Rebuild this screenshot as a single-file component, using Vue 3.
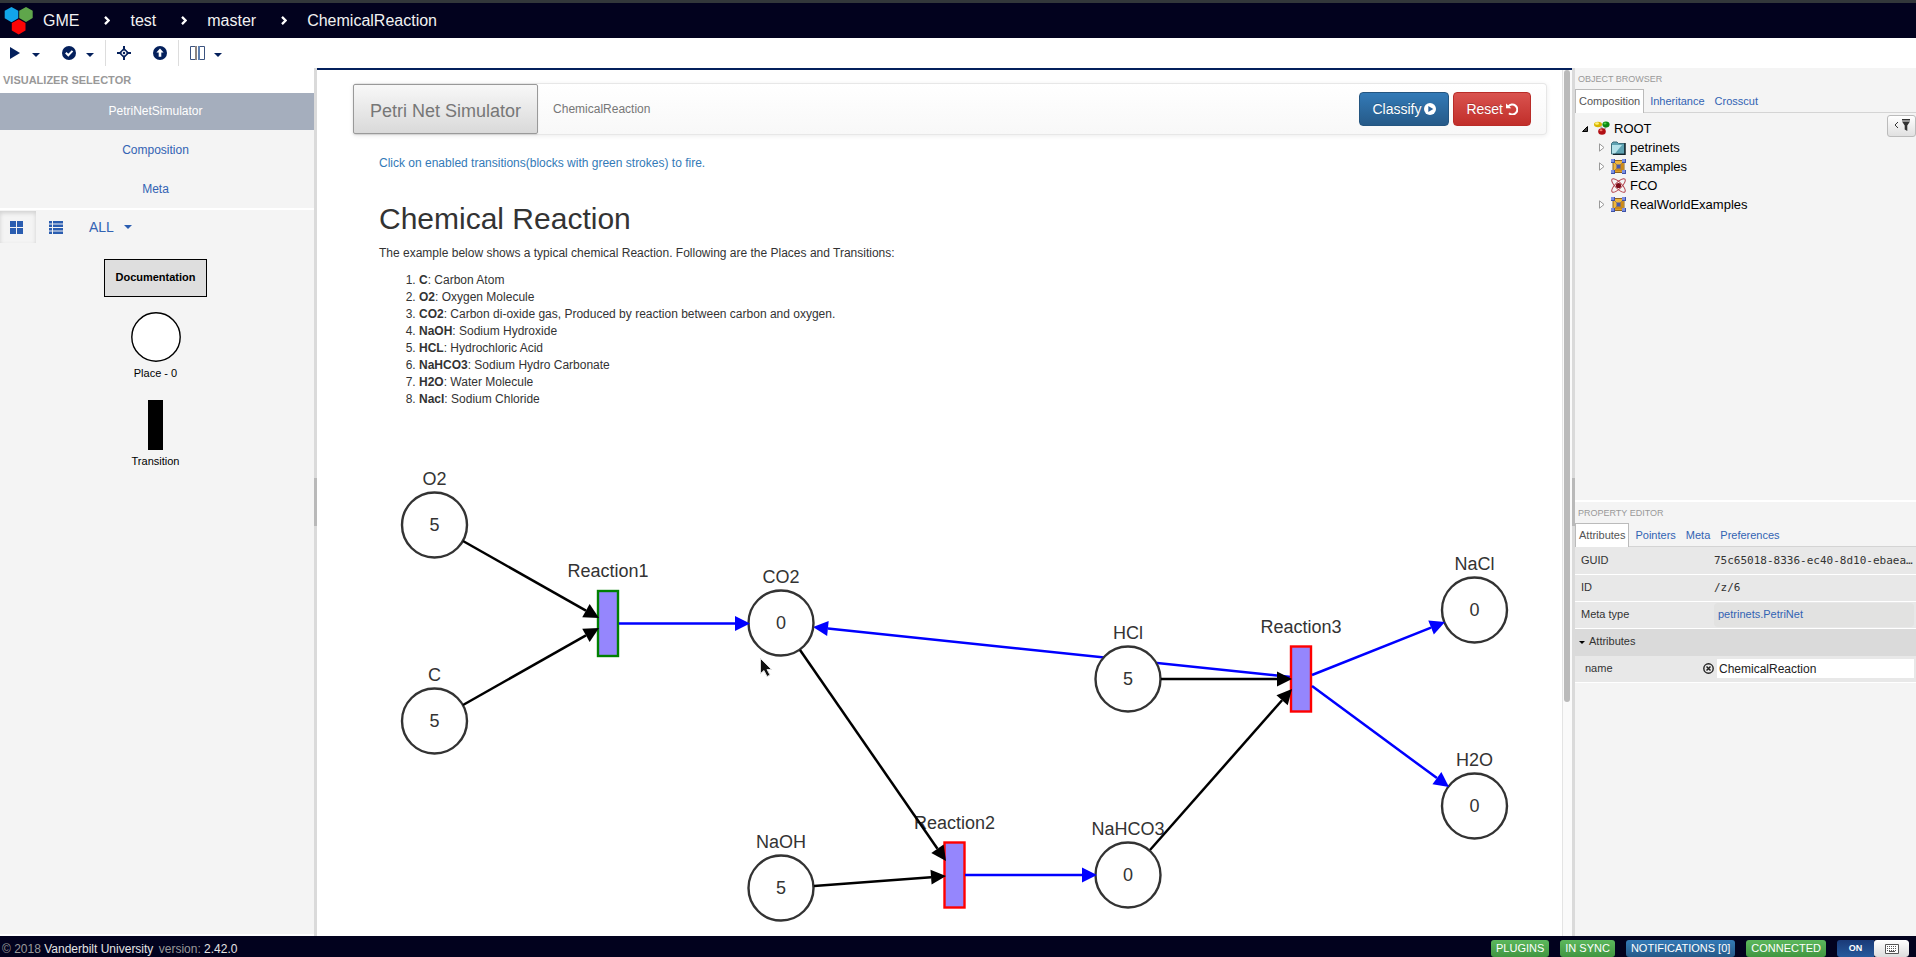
<script setup>
const crumbs = ['test', 'master', 'ChemicalReaction']
const visualizers = ['PetriNetSimulator', 'Composition', 'Meta']
const species = [
  ['C', 'Carbon Atom'],
  ['O2', 'Oxygen Molecule'],
  ['CO2', 'Carbon di-oxide gas, Produced by reaction between carbon and oxygen.'],
  ['NaOH', 'Sodium Hydroxide'],
  ['HCL', 'Hydrochloric Acid'],
  ['NaHCO3', 'Sodium Hydro Carbonate'],
  ['H2O', 'Water Molecule'],
  ['Nacl', 'Sodium Chloride']
]
const places = [
  { name: 'O2', tokens: 5, x: 117.5, y: 95 },
  { name: 'C', tokens: 5, x: 117.5, y: 291 },
  { name: 'CO2', tokens: 0, x: 464, y: 193 },
  { name: 'NaOH', tokens: 5, x: 464, y: 458 },
  { name: 'HCl', tokens: 5, x: 811, y: 249 },
  { name: 'NaHCO3', tokens: 0, x: 811, y: 445 },
  { name: 'NaCl', tokens: 0, x: 1157.5, y: 180 },
  { name: 'H2O', tokens: 0, x: 1157.5, y: 376 }
]
const transitions = [
  { name: 'Reaction1', x: 291, y: 193, enabled: true },
  { name: 'Reaction2', x: 637.5, y: 444.5, enabled: false },
  { name: 'Reaction3', x: 984, y: 248.5, enabled: false }
]
function arc(x1, y1, x2, y2, kind) {
  const len = Math.hypot(x2 - x1, y2 - y1)
  const ux = (x2 - x1) / len
  const uy = (y2 - y1) / len
  const bx = x2 - ux * 15
  const by = y2 - uy * 15
  return {
    line: `M${x1} ${y1}L${bx} ${by}`,
    head: `${x2},${y2} ${bx - uy * 7.5},${by + ux * 7.5} ${bx + uy * 7.5},${by - ux * 7.5}`,
    kind
  }
}
const backArcs = [arc(974, 247, 496, 197, 'out')]
const arcs = [
  arc(146, 111, 282, 188, 'in'),
  arc(146, 275, 282, 198, 'in'),
  arc(302, 193.5, 433, 193.5, 'out'),
  arc(483, 220, 629, 431, 'in'),
  arc(497, 456, 629, 446, 'in'),
  arc(648, 445, 780, 445, 'out'),
  arc(844, 249, 975, 249, 'in'),
  arc(833, 420, 975, 259, 'in'),
  arc(995, 245, 1128, 192, 'out'),
  arc(995, 256, 1132, 357, 'out')
]
const treeItems = [
  { name: 'petrinets', icon: 'folder', open: true },
  { name: 'Examples', icon: 'model', open: true },
  { name: 'FCO', icon: 'atom', open: false },
  { name: 'RealWorldExamples', icon: 'model', open: true }
]
</script>

<template>
  <div class="app">
    <header class="topbar">
      <svg class="logo" width="30" height="30" viewBox="0 0 30 30" aria-hidden="true">
        <path fill="#12a5e9" d="M7.500 1l6.800 3.800v7.500l-6.800 3.900-6.800-3.900v-7.500z" />
        <path fill="#5fa64b" d="M22 1l6.700 3.800v7.300l-6.700 3.900-6.800-3.900v-7.300z" />
        <path fill="#fb0505" d="M14.700 13.200l6.800 3.900v7.500l-6.800 4-6.900-4v-7.500z" />
      </svg>
      <a href="#" class="crumb">GME</a>
      <template v-for="c in crumbs" :key="c">
        <svg class="chev" width="6" height="9" viewBox="0 0 6 9" aria-hidden="true">
          <path d="M1 .900L4.600 4.500 1 8.100" fill="none" stroke="#fff" stroke-width="2.300" />
        </svg>
        <a href="#" class="crumb">{{ c }}</a>
      </template>
    </header>

    <div class="toolbar">
      <button class="tool tool-play" aria-label="Run plugin">
        <svg width="10" height="12" viewBox="0 0 10 12"><path d="M0 0l10 6-10 6z" fill="#04205c" /></svg>
        <span class="caret"></span>
      </button>
      <button class="tool tool-check" aria-label="Constraints">
        <svg width="14" height="14" viewBox="0 0 14 14"><circle cx="7" cy="7" r="7" fill="#04205c" /><path d="M3.800 6.800l2.500 2.500 4.200-4.400" fill="none" stroke="#fff" stroke-width="2" /></svg>
        <span class="caret"></span>
      </button>
      <span class="sep"></span>
      <button class="tool tool-move" aria-label="Crosshair">
        <svg width="14" height="14" viewBox="0 0 14 14"><path fill="#04205c" d="M6 0h2v4.500H6zM6 9.500h2V14H6zM0 6h4.500v2H0zM9.500 6H14v2H9.500z" /><path d="M7 2.800L11.200 7 7 11.200 2.800 7z" fill="none" stroke="#04205c" stroke-width="1.600" stroke-dasharray="4.600 1.340" stroke-dashoffset="-.67" /><circle cx="7" cy="7" r="1.200" fill="#04205c" /></svg>
      </button>
      <button class="tool tool-up" aria-label="Apply">
        <svg width="14" height="14" viewBox="0 0 14 14"><circle cx="7" cy="7" r="7" fill="#04205c" /><path d="M7 2.600l3.600 4H8.300v4.200H5.700V6.600H3.400z" fill="#fff" /></svg>
      </button>
      <span class="sep"></span>
      <button class="tool tool-split" aria-label="Split panels">
        <svg width="15" height="14" viewBox="0 0 15 14"><path d="M.5.500h5v13h-5zM9.500.500h5v13h-5z" fill="none" stroke="#3c537f" /><path d="M5 0h2v14H5z" fill="#8d8580" /><path d="M8 0h2v14H8z" fill="#5f7fae" /></svg>
        <span class="caret"></span>
      </button>
    </div>

    <div class="body">
      <aside class="left">
        <h2 class="left-title">VISUALIZER SELECTOR</h2>
        <nav class="visualizers">
          <a v-for="(v, i) in visualizers" :key="v" href="#" :class="{ active: i === 0 }">{{ v }}</a>
        </nav>
        <div class="filter">
          <button class="view on" aria-label="Grid view">
            <svg width="13" height="13" viewBox="0 0 13 13"><path fill="#2a5db0" d="M0 0h6v6H0zM7 0h6v6H7zM0 7h6v6H0zM7 7h6v6H7z" /></svg>
          </button>
          <button class="view" aria-label="List view">
            <svg width="14" height="13" viewBox="0 0 14 13"><path fill="#2a5db0" d="M0 0h3v2.500H0zM4 0h10v2.500H4zM0 3.500h3V6H0zM4 3.500h10V6H4zM0 7h3v2.500H0zM4 7h10v2.500H4zM0 10.500h3V13H0zM4 10.500h10V13H4z" /></svg>
          </button>
          <button class="all">ALL <span class="caret"></span></button>
        </div>
        <div class="parts">
          <div class="doc">Documentation</div>
          <svg class="place" width="50" height="50" viewBox="0 0 50 50"><circle cx="25" cy="25" r="24.200" fill="#fff" stroke="#000" stroke-width="1.400" /></svg>
          <div class="part-label">Place - 0</div>
          <div class="trans"></div>
          <div class="part-label">Transition</div>
        </div>
      </aside>
      <div class="splitter"><i></i></div>

      <main class="center">
        <div class="scroll">
          <div class="navbar">
            <a href="#" class="brand">Petri Net Simulator</a>
            <a href="#" class="current">ChemicalReaction</a>
            <div class="actions">
              <button class="btn primary">Classify
                <svg width="12" height="12" viewBox="0 0 12 12"><circle cx="6" cy="6" r="6" fill="#fff" /><path d="M4.300 2.900l5 3.100-5 3.100z" fill="#2a639c" /></svg>
              </button>
              <button class="btn danger">Reset
                <svg width="12" height="12" viewBox="0 0 12 12"><path d="M2.300 3.500A5 5 0 1 1 3 10.300" fill="none" stroke="#fff" stroke-width="2" /><path d="M0 .500l5.300 4.800H0z" fill="#fff" /></svg>
              </button>
            </div>
          </div>
          <div class="article">
            <a href="#" class="hint">Click on enabled transitions(blocks with green strokes) to fire.</a>
            <h1>Chemical Reaction</h1>
            <p>The example below shows a typical chemical Reaction. Following are the Places and Transitions:</p>
            <ol>
              <li v-for="s in species" :key="s[0]"><b>{{ s[0] }}</b>: {{ s[1] }}</li>
            </ol>
          </div>
          <svg class="net" role="img" aria-label="Petri net">
            <g v-for="(a, i) in backArcs" :key="'b' + i" :class="a.kind">
              <path :d="a.line" /><polygon :points="a.head" />
            </g>
            <g v-for="p in places" :key="p.name">
              <circle :cx="p.x" :cy="p.y" r="32.500" class="node" />
              <text :x="p.x" :y="p.y + 6">{{ p.tokens }}</text>
              <text :x="p.x" :y="p.y - 40">{{ p.name }}</text>
            </g>
            <g v-for="t in transitions" :key="t.name">
              <rect :x="t.x - 10" :y="t.y - 32" width="20" height="65" :class="['bar', { enabled: t.enabled }]" />
              <text :x="t.x" :y="t.y - 46">{{ t.name }}</text>
            </g>
            <g v-for="(a, i) in arcs" :key="i" :class="a.kind">
              <path :d="a.line" /><polygon :points="a.head" />
            </g>
            <path class="pointer" d="M443.500 228.500v15l3.500-3 3 6 3-1.500-3-5.500h4.500z" />
          </svg>
        </div>
        <div class="track"><i></i></div>
      </main>
      <div class="splitter"><i></i></div>

      <aside class="right">
        <section class="browser">
          <h2>OBJECT BROWSER</h2>
          <nav class="tabs">
            <a href="#" class="active">Composition</a><a href="#">Inheritance</a><a href="#">Crosscut</a>
          </nav>
          <div class="tree-area">
            <ul class="tree">
              <li class="root">
                <svg class="exp" width="6" height="6" viewBox="0 0 6 6"><path d="M5.500.500v5h-5z" fill="#444" stroke="#000" /></svg>
                <svg width="16" height="15" viewBox="0 0 16 15"><ellipse cx="4" cy="3.500" rx="4" ry="2.700" fill="#d9b600" /><ellipse cx="3" cy="2.500" rx="2" ry="1.200" fill="#fff27a" /><path d="M6.500 5.500L10 9l2.500-4" fill="none" stroke="#aaa" stroke-width="1.500" /><ellipse cx="12" cy="3.500" rx="3.600" ry="3" fill="#0b8a12" /><ellipse cx="11" cy="2.500" rx="1.500" ry="1" fill="#52d04c" /><ellipse cx="8" cy="10.500" rx="3.800" ry="3.300" fill="#b10f14" /><ellipse cx="7" cy="9.300" rx="1.500" ry="1" fill="#f47a6a" /></svg>
                <span>ROOT</span>
              </li>
              <li v-for="t in treeItems" :key="t.name">
                <svg class="exp" width="6" height="9" viewBox="0 0 6 9"><path v-if="t.open" d="M.5.800v7.400L5 4.500z" fill="#fff" stroke="#999" /></svg>
                <svg v-if="t.icon === 'folder'" width="15" height="14" viewBox="0 0 15 14"><path d="M.5 2.500L2 1h4l1.500 1.500h6V13H.5z" fill="#5fa3b3" stroke="#3f6f7c" /><path d="M1 4h10l-7 8.500H1z" fill="#b5e2ea" /><path d="M14 2v11.500H2" fill="none" stroke="#12242c" stroke-width="1.500" /></svg>
                <svg v-else-if="t.icon === 'model'" width="15" height="15" viewBox="0 0 15 15"><path d="M2 1.500h11v12H2z" fill="#efb63c" stroke="#8f6420" /><path d="M3 12.500L12 3v9.500z" fill="#cf8a16" /><path d="M3 3l9 9M12 3l-9 9" stroke="#a9854a" /><path d="M5.500 5.500h4v4h-4z" fill="#4658b0" /><path d="M0 0h4v4H0zM11 0h4v4h-4zM0 11h4v4H0zM11 11h4v4h-4z" fill="#3e52a8" /><path d="M0 0h3v3H0zM11 0h3v3h-3zM0 11h3v3H0zM11 11h3v3h-3z" fill="#7c90e4" /></svg>
                <svg v-else width="15" height="15" viewBox="0 0 15 15"><g fill="none" stroke="#b3424d"><ellipse cx="7.500" cy="7.500" rx="9" ry="3.200" transform="rotate(45 7.500 7.500)" /><ellipse cx="7.500" cy="7.500" rx="9" ry="3.200" transform="rotate(-45 7.500 7.500)" /></g><circle cx="7.500" cy="7.500" r="2.600" fill="#7d0c18" /></svg>
                <span>{{ t.name }}</span>
              </li>
            </ul>
            <button class="funnel" aria-label="Filter">
              <svg width="16" height="14" viewBox="0 0 16 14"><path d="M4 4L1 7l3 3" fill="none" stroke="#333" /><path d="M8 1h8v1.500H8zM8 3.500h8l-2.700 4V13l-2.600-1.500v-4z" fill="#333" /></svg>
            </button>
          </div>
        </section>

        <section class="editor">
          <h2>PROPERTY EDITOR</h2>
          <nav class="tabs">
            <a href="#" class="active">Attributes</a><a href="#">Pointers</a><a href="#">Meta</a><a href="#">Preferences</a>
          </nav>
          <table>
            <tbody>
              <tr><th>GUID</th><td class="mono">75c65018-8336-ec40-8d10-ebaea…</td></tr>
              <tr><th>ID</th><td class="mono">/z/6</td></tr>
              <tr><th>Meta type</th><td><a href="#" class="meta">petrinets.PetriNet</a></td></tr>
              <tr class="group"><th colspan="2"><span class="caret small"></span>Attributes</th></tr>
              <tr class="field">
                <th><label for="attr-name">name</label></th>
                <td>
                  <div class="edit">
                    <button aria-label="Reset value"><svg width="11" height="11" viewBox="0 0 11 11"><circle cx="5.500" cy="5.500" r="4.700" fill="none" stroke="#222" stroke-width="1.400" /><path d="M3.500 3.500l4 4M7.500 3.500l-4 4" stroke="#222" stroke-width="1.500" /></svg></button>
                    <input id="attr-name" type="text" value="ChemicalReaction" />
                  </div>
                </td>
              </tr>
            </tbody>
          </table>
        </section>
      </aside>
    </div>

    <footer class="footer">
      <div class="copy">© 2018 <a href="#">Vanderbilt University</a> <span class="ver">version: <b>2.42.0</b></span></div>
      <div class="badges">
        <button class="badge green">PLUGINS</button>
        <button class="badge green">IN SYNC</button>
        <button class="badge blue">NOTIFICATIONS [0]</button>
        <button class="badge green">CONNECTED</button>
        <button class="toggle" aria-label="Keyboard shortcuts on">
          <span class="on">ON</span>
          <span class="knob"><svg width="14" height="10" viewBox="0 0 14 10"><path d="M.5.500h13v9H.5z" fill="#fff" stroke="#555" /><path d="M2 2.500h10M2 4.500h10M2 6.500h10" stroke="#555" stroke-dasharray="1 1" /><path d="M4 7.500h6" stroke="#555" /></svg></span>
        </button>
      </div>
    </footer>
  </div>
</template>

<style>
body {
  margin: 0;
  background: #fff;
}
</style>

<style scoped>
.app {
  display: grid;
  grid-template-rows: auto auto minmax(0, 1fr) auto;
  height: 100vh;
  overflow: hidden;
  font: 12px/17px "Liberation Sans", Arial, sans-serif;
  color: #333;
}
a {
  color: #3263b3;
  text-decoration: none;
}
button {
  margin: 0;
  padding: 0;
  border: 0;
  background: none;
  font: inherit;
  color: inherit;
}
h1,
h2,
p,
ol,
ul {
  margin: 0;
  padding: 0;
}
svg {
  display: block;
  flex: none;
}
.caret {
  width: 0;
  border: 4px solid transparent;
  border-top-color: #04205c;
  border-bottom: 0;
}

.topbar {
  display: flex;
  align-items: center;
  height: 35px;
  padding-left: 4px;
  border-top: 3px solid #32373a;
  background: #02021e;
}
.logo {
  margin-right: 9px;
}
.crumb {
  font-size: 16px;
  color: #f2f2f2;
}
.chev {
  margin: 0 20px 0 25px;
}

.toolbar {
  display: flex;
  align-items: center;
  height: 30px;
  padding-left: 10px;
}
.tool {
  display: flex;
  align-items: center;
}
.tool .caret {
  margin-top: 3px;
}
.tool-play {
  gap: 12px;
  margin-right: 22px;
}
.tool-check {
  gap: 10px;
  margin-right: 11px;
}
.tool-move {
  margin: 0 22px 0 11px;
}
.tool-up {
  margin-right: 11px;
}
.tool-split {
  gap: 9px;
  margin-left: 11px;
}
.sep {
  width: 1px;
  height: 26px;
  background: #ddd;
}

.body {
  display: grid;
  grid-template-columns: 314px 3px minmax(0, 1fr) 3px 341px;
  min-height: 0;
}
.splitter {
  display: flex;
  align-items: center;
  background: #dadada;
}
.splitter i {
  width: 3px;
  height: 48px;
  background: #b9b9b9;
}

.left {
  border-bottom: 2px solid #fff;
  background: #f4f4f4;
}
.left-title {
  height: 25px;
  padding-left: 3px;
  background: #fff;
  color: #999;
  font-size: 11px;
  line-height: 24px;
}
.visualizers {
  display: flex;
  flex-direction: column;
  gap: 2px;
  border-bottom: 2px solid #fff;
}
.visualizers a {
  padding-right: 3px;
  text-align: center;
  line-height: 37px;
}
.visualizers .active {
  background: #a5aebd;
  color: #fff;
}
.filter {
  display: flex;
  align-items: center;
  height: 34px;
}
.view {
  display: flex;
  align-items: center;
  justify-content: center;
  box-sizing: border-box;
  width: 36px;
  height: 32px;
}
.view + .view {
  width: 40px;
}
.view.on {
  padding-right: 3px;
  box-shadow: inset 0 2px 4px rgba(0, 0, 0, 0.15);
}
.all {
  display: flex;
  align-items: center;
  gap: 10px;
  margin-left: 13px;
  font-size: 14px;
  line-height: 20px;
  color: #3263b3;
}
.all .caret {
  border-top-color: #2a5db0;
}
.parts {
  display: flex;
  flex-direction: column;
  align-items: center;
  padding: 15px 3px 0 0;
  color: #000;
  font-size: 11px;
}
.doc {
  box-sizing: border-box;
  width: 103px;
  height: 38px;
  border: 1px solid #000;
  background: #dedede;
  font-weight: bold;
  line-height: 34px;
  text-align: center;
}
.place {
  margin-top: 15px;
}
.part-label {
  margin-top: 3px;
}
.trans {
  width: 15px;
  height: 50px;
  margin-top: 18px;
  background: #000;
}

.center {
  display: flex;
  min-width: 0;
  overflow: hidden;
  border-top: 2px solid #04205c;
  background: #fff;
}
.scroll {
  flex: 1;
  min-width: 0;
  overflow: hidden;
}
.track {
  width: 8px;
  padding-left: 1px;
  border-left: 1px solid #e4e4e4;
  background: #fafafa;
}
.track i {
  display: block;
  width: 6px;
  height: 73%;
  border-radius: 3px;
  background: #bababa;
}
.navbar {
  display: flex;
  align-items: center;
  box-sizing: border-box;
  height: 52px;
  margin: 13px 15px 0 36px;
  padding-right: 15px;
  border: 1px solid #e7e7e7;
  border-left: 0;
  border-radius: 4px;
  background: linear-gradient(#fff, #f8f8f8);
  box-shadow: 0 1px 5px rgba(0, 0, 0, 0.08);
}
.brand {
  box-sizing: border-box;
  height: 50px;
  padding: 0 16px;
  border: 1px solid #999;
  border-radius: 2px;
  background: linear-gradient(#f8f8f8, #d9d9d9);
  box-shadow: 0 1px 2px rgba(0, 0, 0, 0.1);
  color: #777;
  font-size: 18px;
  line-height: 52px;
}
.current {
  margin-left: 15px;
  color: #777;
}
.actions {
  display: flex;
  gap: 4px;
  margin-left: auto;
}
.btn {
  display: flex;
  align-items: center;
  gap: 3px;
  height: 34px;
  padding: 0 12px;
  border: 1px solid;
  border-radius: 4px;
  color: #fff;
  font-size: 14px;
  text-shadow: 0 -1px 0 rgba(0, 0, 0, 0.2);
}
.primary {
  border-color: #245580;
  background: linear-gradient(#337ab7, #265a88);
}
.danger {
  border-color: #b92c28;
  background: linear-gradient(#d9534f, #c12e2a);
}
.article {
  padding: 20px 62px 0;
}
.hint {
  display: block;
  color: #337ab7;
}
h1 {
  margin: 30px 0 10px;
  font-size: 30px;
  font-weight: normal;
  line-height: 33px;
}
ol {
  margin-top: 10px;
  padding-left: 40px;
}
.net {
  width: 100%;
  height: 506px;
  margin-top: 22px;
  overflow: visible;
}
.net text {
  fill: #333;
  font-size: 18px;
  text-anchor: middle;
}
.node {
  fill: #fff;
  stroke: #333;
  stroke-width: 2.4px;
}
.bar {
  fill: #9586fd;
  stroke: #f00;
  stroke-width: 2.4px;
}
.bar.enabled {
  stroke: #008000;
}
.in path,
.out path {
  fill: none;
  stroke: #000;
  stroke-width: 2.5px;
}
.out path {
  stroke: #00f;
}
.out polygon {
  fill: #00f;
}
.pointer {
  fill: #111;
  stroke: #ddd;
}

.right {
  display: grid;
  grid-template-rows: 434px minmax(0, 1fr);
  min-width: 0;
  background: #f4f4f4;
}
.browser {
  box-sizing: border-box;
  border-bottom: 2px solid #fff;
}
.editor {
  min-width: 0;
}
.right h2 {
  height: 21px;
  padding-left: 3px;
  color: #999;
  font-size: 9px;
  font-weight: normal;
  line-height: 22px;
}
.tabs {
  display: flex;
  gap: 2px;
  border-bottom: 1px solid #d4d4d4;
  font-size: 11px;
}
.tabs a {
  height: 22px;
  margin-bottom: -1px;
  padding: 0 3px;
  border: 1px solid transparent;
  border-bottom: 0;
  line-height: 23px;
}
.tabs .active {
  height: 23px;
  border-color: #bbb;
  background: #fff;
  color: #555;
}
.tree-area {
  display: flex;
  align-items: flex-start;
  justify-content: space-between;
  padding-top: 2px;
}
.tree {
  padding-top: 4px;
  list-style: none;
  color: #000;
  font-size: 13px;
}
.tree li {
  display: flex;
  align-items: center;
  height: 19px;
  padding-left: 24px;
}
.tree .root {
  padding-left: 7px;
}
.tree .exp {
  margin-right: 6px;
}
.tree span {
  margin-left: 4px;
}
.funnel {
  display: flex;
  align-items: center;
  justify-content: center;
  box-sizing: border-box;
  width: 29px;
  height: 22px;
  padding-bottom: 3px;
  border: 1px solid #bbb;
  border-radius: 3px;
  background: linear-gradient(#fff, #e0e0e0);
}

table {
  width: 100%;
  table-layout: fixed;
  border-collapse: collapse;
  font-size: 11px;
}
tr {
  height: 27px;
  background: #e8e8e8;
}
th,
td {
  box-sizing: border-box;
  height: 27px;
  padding: 0;
  border-bottom: 1px solid #fff;
  font-weight: normal;
  text-align: left;
}
th {
  width: 139px;
  padding-left: 6px;
}
td {
  padding-right: 2px;
}
.mono {
  font-family: "DejaVu Sans Mono", monospace;
  white-space: nowrap;
}
.meta {
  display: block;
  height: 24px;
  padding-left: 4px;
  border-radius: 4px;
  background: #e2e2e1;
  line-height: 23px;
}
.group {
  background: #dadada;
}
.group th {
  border-bottom-color: #dadada;
  padding-left: 4px;
}
.caret.small {
  display: inline-block;
  margin-right: 4px;
  border-width: 3px 3px 0;
  border-top-color: #000;
  vertical-align: middle;
}
.field th {
  padding-left: 10px;
}
.edit {
  display: flex;
  align-items: center;
  gap: 3px;
  margin-left: -11px;
}
.edit input {
  box-sizing: border-box;
  flex: 1;
  min-width: 0;
  height: 19px;
  padding: 0 2px;
  border: 0;
  background: #fff;
  color: #222;
  font: 12px "Liberation Sans", Arial, sans-serif;
}

.footer {
  display: flex;
  justify-content: space-between;
  height: 21px;
  padding: 0 7px 0 2px;
  overflow: hidden;
  background: #02021e;
  color: #999;
}
.copy {
  padding-top: 4px;
  line-height: 18px;
}
.copy a,
.copy b {
  color: #e4e4e4;
  font-weight: normal;
}
.ver {
  margin-left: 2px;
}
.badges {
  display: flex;
  gap: 11px;
  padding-top: 4px;
}
.badge {
  height: 17px;
  padding: 0 5px;
  border-radius: 3px;
  color: #fff;
  font-size: 11px;
}
.green {
  background: linear-gradient(#5cb85c, #419641);
}
.blue {
  background: linear-gradient(#337ab7, #265a88);
}
.toggle {
  display: flex;
  height: 17px;
  border-radius: 3px;
  overflow: hidden;
  color: #fff;
  font-size: 9px;
  font-weight: bold;
}
.toggle .on {
  width: 37px;
  background: linear-gradient(#1a3a78, #265a9c);
  line-height: 17px;
}
.knob {
  display: flex;
  align-items: center;
  justify-content: center;
  width: 35px;
  height: 17px;
  border-radius: 3px;
  background: linear-gradient(#fff, #ddd);
}
</style>
